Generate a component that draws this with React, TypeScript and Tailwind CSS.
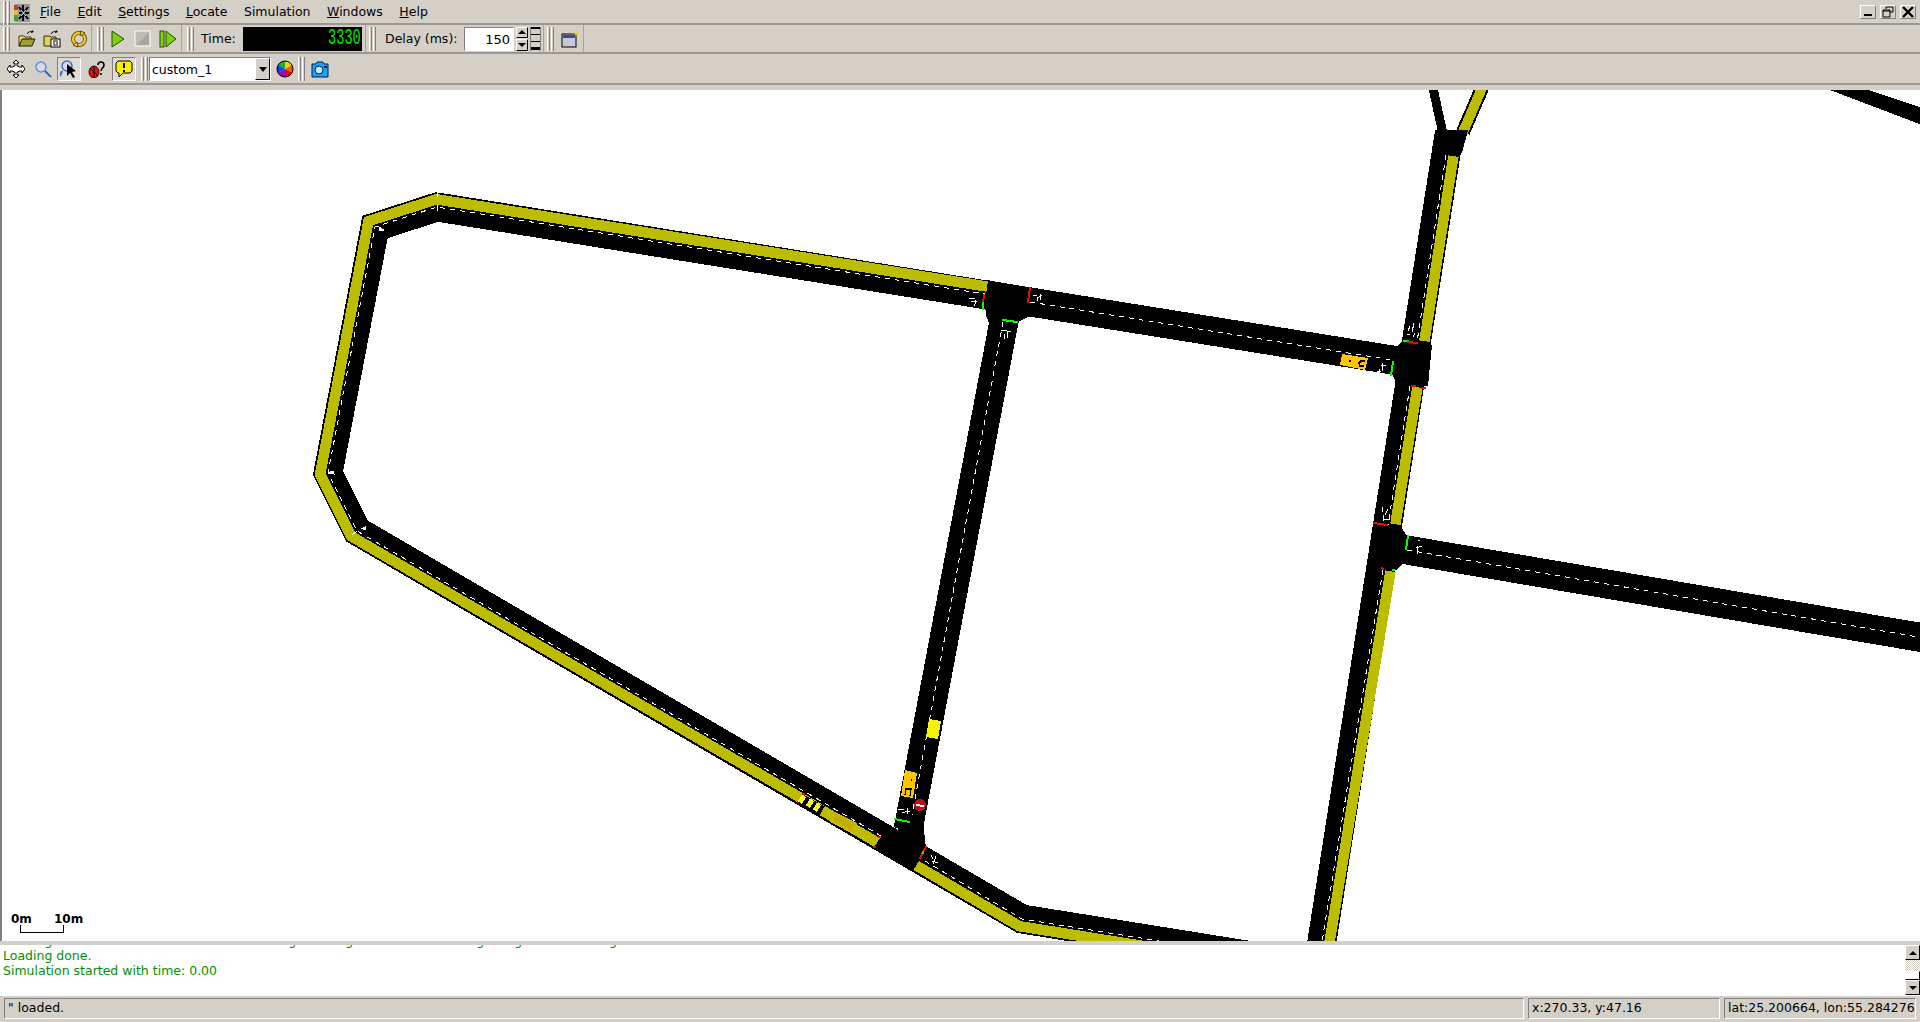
import React from 'react';

type Pt = [number, number];

// shifts a polyline sideways, keeping mitred corners (d > 0 is the driver's left)
function offsetLine(pts: Pt[], d: number): Pt[] {
  const normal = (a: Pt, b: Pt): Pt => {
    const dx = b[0] - a[0];
    const dy = b[1] - a[1];
    const len = Math.hypot(dx, dy);
    return [dy / len, -dx / len];
  };
  return pts.map((p, i) => {
    const n1 = normal(pts[Math.max(i - 1, 0)], pts[Math.max(i, 1)]);
    const n2 = normal(pts[Math.min(i, pts.length - 2)], pts[Math.min(i + 1, pts.length - 1)]);
    const mx = n1[0] + n2[0];
    const my = n1[1] + n2[1];
    const k = (2 * d) / (mx * mx + my * my);
    return [p[0] + mx * k, p[1] + my * k] as Pt;
  });
}

const str = (pts: Pt[]) => pts.map((p) => p.join(',')).join(' ');

const loop: Pt[] = [[1340, 970], [1022, 919], [357, 531], [328, 473], [375, 227], [437, 207], [1405, 362]];
const blackRoads: Pt[][] = [
  loop,
  [[1008, 300], [908, 830]],
  [[1449, 135], [1319, 960]],
  [[1395, 548], [1930, 639]],
];
const laneStrips: Pt[][] = [
  offsetLine([[1340, 970], [1022, 919], [920, 859]], 7.5),
  offsetLine([[881, 836], [357, 531], [328, 473], [375, 227], [437, 207], [986, 294]], 7.5),
  offsetLine([[1446, 155], [1417, 340]], 7.5),
  offsetLine([[1410, 386], [1388, 523]], 7.5),
  offsetLine([[1383, 570], [1319, 960]], 7.5),
];
const centreLines: Pt[][] = [
  [[1340, 970], [1022, 919], [925, 861]],
  [[881, 836], [357, 531], [328, 473], [375, 227], [437, 207], [985, 294]],
  [[1030, 302], [1392, 360]],
  [[1003, 322], [912, 815]],
  [[1446, 155], [1417, 342]],
  [[1410, 386], [1388, 525]],
  [[1383, 570], [1319, 960]],
  [[1407, 550], [1930, 639]],
];
const junctions: string[] = [
  '987,280 1032,288 1030,316 1018,322 990,325 986,316',
  '1398,345 1403,340 1432,345 1428,386 1397,385 1392,373',
  '1402,528 1406,535 1403,563 1397,570 1378,570 1385,522',
  '895,819 923,822 926,848 905,852',
  '1435,130 1468,130 1462,153 1433,153',
];
const RED = '#ff0000';
const GREEN = '#00ff00';
const signals: [number, number, number, number, string][] = [
  [984, 295, 983, 303, RED], [983, 303, 983, 309, GREEN], [1030, 288, 1028, 302, RED], [1003, 320, 1017, 322, GREEN],
  [1393, 362, 1391, 375, GREEN], [1404, 341, 1408, 341, GREEN], [1408, 342, 1417, 343, RED],
  [1412, 386, 1415, 386, RED], [1422, 388, 1425, 388, RED],
  [1374, 523, 1387, 525, RED], [1408, 536, 1406, 549, GREEN], [1382, 568, 1383, 569, RED], [1393, 570, 1394, 570, GREEN],
  [895, 819, 909, 822, GREEN], [926, 847, 923, 852, RED], [923, 852, 922, 855, GREEN], [922, 855, 920, 858, RED],
  [879, 837, 880, 837, RED], [874, 847, 875, 847, RED], [803, 794, 804, 794, RED], [798, 802, 799, 802, RED],
];
const laneArrows = [
  'M969 298h6M971 301l6 1M976 300l-1 4M974 304v2',
  'M1033 295h4M1037 298l5-3M1040 294v6M1037 301v-3',
  'M1001 330h4l2 1v7M1007 331h4M1004 334v5',
  'M898 810l6-1M905 812l5-1M907 808v6M902 812h3',
  'M1379 373l1-4M1381 366l5-1M1382 363v8M1377 371h4',
  'M1408 331l2-5M1412 332l2-9M1410 334l-3 1M1413 337l2-4',
  'M1382 512l1-5M1384 519l6 1M1385 515l3-6M1383 521v-6',
  'M1418 541l2-1M1416 548l6-2M1417 554l1-8',
  'M931 855l2 4M932 861l6 2M936 856l-3 8',
];

function Roads() {
  return (
    <svg className="block" width="1918" height="851" viewBox="2 90 1918 851" shapeRendering="crispEdges" fill="none">
      {blackRoads.map((r, i) => (
        <polyline key={i} points={str(r)} stroke="#000" strokeWidth="29" strokeLinejoin="miter" strokeMiterlimit="8" />
      ))}
      <polygon points="1830,90 1868,90 1922,108 1922,125" fill="#000" />
      <line x1="1433" y1="88" x2="1443" y2="134" stroke="#000" strokeWidth="9" />
      <line x1="1482" y1="88" x2="1463" y2="132" stroke="#000" strokeWidth="14" />
      <line x1="1482" y1="88" x2="1463" y2="132" stroke="#bcbc00" strokeWidth="10" />
      {junctions.map((p) => (
        <polygon key={p} points={p} fill="#000" />
      ))}
      {laneStrips.map((r, i) => (
        <polyline key={i} points={str(r)} stroke="#bcbc00" strokeWidth="10.5" strokeMiterlimit="8" />
      ))}
      {centreLines.map((r, i) => (
        <polyline key={i} points={str(r)} stroke="#fff" strokeWidth="1" strokeDasharray="5 5" />
      ))}
      {signals.map(([x1, y1, x2, y2, c], i) => (
        <line key={i} x1={x1} y1={y1} x2={x2} y2={y2} stroke={c} strokeWidth="2" strokeLinecap="square" />
      ))}
      {laneArrows.map((d) => (
        <path key={d} d={d} stroke="#fff" strokeWidth="1" />
      ))}
      <path d="M379 227l5 3l-4 1zM437 192v5M437 205v6M328 473l5-2l1 3zM357 531l-5 4M361 529l4-2l0 3" stroke="#fff" strokeWidth="1" fill="#fff" />

      {/* vehicles */}
      <line x1="801" y1="799" x2="822" y2="811" stroke="#000" strokeWidth="10.5" />
      {[[800, 798], [808, 802], [815, 806]].map(([x, y]) => (
        <line key={x} x1={x} y1={y} x2={x + 4} y2={y + 2.4} stroke="#f8f820" strokeWidth="8" />
      ))}
      <polygon points="835,812 857,823 853,833 830,822" fill="#e0b000" />
      <polygon points="835,814 855,824 852,831 832,821" fill="#bcb000" />
      <polygon points="929,719 941,721 938,739 926,737" fill="#f4f400" />
      <polygon points="905,770 917,773 913,798 901,796" fill="#ffc400" />
      <path d="M905 795l1-6h5l-1 7M911 780h1" stroke="#000" strokeWidth="1.2" />
      <polygon points="1342,354 1368,358 1365,370 1340,365" fill="#ffc400" />
      <path d="M1365 361h-4l-2 2l1 3h4M1350 360v2" stroke="#000" strokeWidth="1.5" />
      <circle cx="920" cy="805" r="6" fill="#b80f20" />
      <line x1="916" y1="805" x2="924" y2="806" stroke="#fff" strokeWidth="2" />

      {/* scale */}
      <path d="M20 925v7h43v-7" stroke="#000" strokeWidth="1" />
      <text x="11" y="923" fontFamily="DejaVu Sans" fontWeight="700" fontSize="12" fill="#000" stroke="none">0m</text>
      <text x="54" y="923" fontFamily="DejaVu Sans" fontWeight="700" fontSize="12" fill="#000" stroke="none">10m</text>
    </svg>
  );
}

function Grip({ className = '' }: { className?: string }) {
  return (
    <div className={`flex h-[24px] gap-[1px] ${className}`}>
      <div className="w-[3px] border-l border-r border-l-white border-r-[#808080]" />
      <div className="w-[3px] border-l border-r border-l-white border-r-[#808080]" />
    </div>
  );
}

const Ico = ({ children, size = 18, className = '' }: { children: React.ReactNode; size?: number; className?: string }) => (
  <svg width={size} height={size} viewBox="0 0 18 18" className={`shrink-0 ${className}`}>
    {children}
  </svg>
);

const AppIcon = () => (
  <Ico className="ml-[3px]">
    <rect x="2" y="0" width="15" height="18" fill="#9a9a9a" />
    <rect x="1" y="1" width="4" height="5" fill="#c04040" />
    <rect x="1" y="6" width="4" height="5" fill="#d8c040" />
    <rect x="1" y="11" width="4" height="6" fill="#40a040" />
    <path d="M6 3l9 12M15 3l-9 12M10 1v16M6 9h10" stroke="#000" strokeWidth="2" />
    <path d="M8 6l5 6M13 6l-5 6" stroke="#fff" strokeWidth="1" />
  </Ico>
);
const OpenIcon = ({ className }: { className?: string }) => (
  <Ico className={className}>
    <path d="M1 6h5l1 1h6v2H5l-3 7H1z" fill="#f0e080" stroke="#404000" />
    <path d="M4 9h13l-3 7H1z" fill="#a0a030" stroke="#202000" />
    <path d="M9 4c1-2 3-3 5-2" stroke="#000" fill="none" />
    <path d="M14 0l2 2l-3 1z" fill="#000" />
  </Ico>
);
const OpenNetIcon = ({ className }: { className?: string }) => (
  <Ico className={className}>
    <path d="M1 6h6l1 1h5v9H1z" fill="#e0d060" stroke="#303000" />
    <rect x="8" y="9" width="9" height="8" fill="#fff" stroke="#000" />
    <path d="M10 11h5M10 13h2M13 13h2M10 15h5" stroke="#000" />
    <path d="M8 4c1-2 3-3 5-2" stroke="#000" fill="none" />
    <path d="M13 0l2 2l-3 1z" fill="#000" />
  </Ico>
);
const ReloadIcon = ({ className }: { className?: string }) => (
  <Ico className={className}>
    <circle cx="9" cy="9" r="6" fill="none" stroke="#604800" strokeWidth="4" />
    <circle cx="9" cy="9" r="6" fill="none" stroke="#f0c830" strokeWidth="2.4" />
    <path d="M10 1l5 2l-4 3zM8 17l-5-2l4-3z" fill="#f0d840" stroke="#604800" />
  </Ico>
);
const PlayIcon = ({ className }: { className?: string }) => (
  <Ico className={className}>
    <path d="M3 1l12 8l-12 8z" fill="#80d010" stroke="#205000" />
  </Ico>
);
const StopIcon = ({ className }: { className?: string }) => (
  <Ico className={className}>
    <rect x="1" y="1" width="15" height="15" fill="#c0bcb4" stroke="#fff" />
    <path d="M15 2v13H3z" fill="#aaa69e" />
  </Ico>
);
const StepIcon = ({ className }: { className?: string }) => (
  <Ico className={className}>
    <rect x="1" y="1" width="4" height="16" fill="#80d010" stroke="#205000" />
    <path d="M7 1l10 8l-10 8z" fill="#80d010" stroke="#205000" />
  </Ico>
);
const WindowIcon = ({ className }: { className?: string }) => (
  <Ico className={className}>
    <rect x="1" y="4" width="14" height="13" fill="#c8c8d8" stroke="#000" />
    <rect x="2" y="5" width="12" height="3" fill="#404890" />
    <path d="M15 0l1 2l2 1l-2 1l-1 2l-1-2l-2-1l2-1z" fill="#f0d020" />
  </Ico>
);
const MoveIcon = () => (
  <Ico>
    <path d="M9 0l3 3h-2v3h1l1 1h3V5l3 4l-3 4v-2h-3l-1 1h-1v3h2l-3 3l-3-3h2v-3H7l-1-1H3v2L0 9l3-4v2h3l1-1h1V3H6z" fill="#fff" stroke="#000" />
  </Ico>
);
const LensIcon = () => (
  <Ico>
    <circle cx="7" cy="7" r="5" fill="#d8d8e8" stroke="#6090e0" strokeWidth="1.5" />
    <path d="M11 11l6 6" stroke="#3060d0" strokeWidth="2" />
  </Ico>
);
const LensCursorIcon = () => (
  <Ico>
    <circle cx="7" cy="6" r="5" fill="#d8d8e8" stroke="#4070d0" strokeWidth="1.5" />
    <path d="M2 11l-2 5" stroke="#3060d0" strokeWidth="2" />
    <path d="M7 4l9 7l-4 1l3 5l-2 1l-3-5l-3 3z" fill="#000" />
  </Ico>
);
const LadybugIcon = () => (
  <Ico>
    <ellipse cx="6" cy="12" rx="5" ry="6" fill="#e01010" stroke="#500000" />
    <path d="M2 8l8 8M6 6v12" stroke="#000" />
    <path d="M10 5c0-4 6-4 6 0c0 3-3 3-3 6M13 13v2" stroke="#000" strokeWidth="1.6" fill="none" />
  </Ico>
);
const BubbleIcon = () => (
  <Ico>
    <path d="M3 1h12l2 2v8l-2 2H8l-4 4v-4H3l-2-2V3z" fill="#f8f000" stroke="#000" />
    <path d="M9 3v5M9 10v2" stroke="#000" strokeWidth="2" />
  </Ico>
);
const WheelIcon = () => (
  <Ico>
    <path d="M9 9L9 1A8 8 0 0 1 16 5z" fill="#f0d000" />
    <path d="M9 9L16 5A8 8 0 0 1 16 13z" fill="#f06000" />
    <path d="M9 9L16 13A8 8 0 0 1 9 17z" fill="#e00020" />
    <path d="M9 9L9 17A8 8 0 0 1 2 13z" fill="#a000c0" />
    <path d="M9 9L2 13A8 8 0 0 1 2 5z" fill="#1040e0" />
    <path d="M9 9L2 5A8 8 0 0 1 9 1z" fill="#10b040" />
    <ellipse cx="9" cy="9" rx="8" ry="8" fill="none" stroke="#000" />
  </Ico>
);
const CameraIcon = () => (
  <Ico>
    <path d="M1 4h4l1-2h6l1 2h4v13H1z" fill="#20a0f0" stroke="#002060" />
    <circle cx="8" cy="10" r="4" fill="#c0e8ff" stroke="#002060" />
    <rect x="13" y="6" width="3" height="2" fill="#002060" />
  </Ico>
);

const Btn = ({ children, pressed, className = '' }: { children: React.ReactNode; pressed?: boolean; className?: string }) => (
  <div
    className={`flex items-center justify-center ${
      pressed ? 'h-[24px] border border-t-[#808080] border-l-[#808080] border-b-white border-r-white bg-[#dedbd5]' : ''
    } ${className}`}
  >
    {children}
  </div>
);

const Arrow = ({ up }: { up?: boolean }) => (
  <div className="flex flex-1 items-center justify-center border border-t-white border-l-white border-b-black border-r-black bg-[#d4d0c8]">
    <div
      className={
        up
          ? 'h-0 w-0 border-x-[4px] border-b-[4px] border-x-transparent border-b-black'
          : 'h-0 w-0 border-x-[4px] border-t-[4px] border-x-transparent border-t-black'
      }
    />
  </div>
);

const WinBtn = ({ children }: { children: React.ReactNode }) => (
  <div className="flex h-[14px] w-[16px] items-center justify-center border border-t-white border-l-white border-b-[#808080] border-r-[#808080]">
    <svg width="12" height="12" viewBox="0 0 12 12">
      {children}
    </svg>
  </div>
);

const Menu = ({ first, rest }: { first: string; rest: string }) => (
  <span>
    <span className="underline">{first}</span>
    {rest}
  </span>
);

const Sunken = ({ children, className = '' }: { children: React.ReactNode; className?: string }) => (
  <div className={`flex h-[21px] items-center border border-t-[#808080] border-l-[#808080] border-b-white border-r-white pl-[3px] ${className}`}>
    {children}
  </div>
);

export default function App() {
  return (
    <div className="flex h-[1022px] w-[1920px] flex-col overflow-hidden bg-[#d4d0c8] text-[12.5px] text-black [font-family:'DejaVu_Sans',sans-serif]">
      {/* menu bar */}
      <div className="flex h-[25px] shrink-0 items-center border-b-2 border-[#9c9890] pt-[2px]">
        <Grip className="ml-[3px] h-[20px]" />
        <AppIcon />
        <div className="ml-[9px] flex gap-[16.5px]">
          <Menu first="F" rest="ile" />
          <Menu first="E" rest="dit" />
          <Menu first="S" rest="ettings" />
          <Menu first="L" rest="ocate" />
          <span>Simulation</span>
          <Menu first="W" rest="indows" />
          <Menu first="H" rest="elp" />
        </div>
        <div className="ml-auto mr-[4px] flex gap-[4px] -mt-[2px]">
          <WinBtn>
            <path d="M2 9h8" stroke="#000" strokeWidth="2" />
          </WinBtn>
          <WinBtn>
            <path d="M4 3V1h7v5H8M1 4h7v7H1zM1 5h7" stroke="#000" fill="none" />
          </WinBtn>
          <WinBtn>
            <path d="M1 1l10 10M11 1L1 11" stroke="#000" strokeWidth="2.4" />
          </WinBtn>
        </div>
      </div>

      {/* first tool bar */}
      <div className="flex h-[29px] shrink-0 items-center border-b-2 border-[#9c9890]">
        <div className="flex h-full w-[92px] items-center border-r border-[#a8a49c]">
          <Grip className="ml-[3px]" />
          <OpenIcon className="ml-[8px]" />
          <OpenNetIcon className="ml-[7px]" />
          <ReloadIcon className="ml-[9px]" />
        </div>
        <div className="flex h-full w-[90px] items-center border-r border-[#a8a49c]">
          <Grip className="ml-[5px]" />
          <PlayIcon className="ml-[5px]" />
          <StopIcon className="ml-[7px]" />
          <StepIcon className="ml-[7px]" />
        </div>
        <div className="flex h-full w-[184px] items-center border-r border-[#a8a49c]">
          <Grip className="ml-[5px]" />
          <span className="ml-[7px] w-[42px] pt-[2px]">Time:</span>
          <div className="flex h-[24px] w-[119px] items-center justify-end overflow-hidden bg-black pr-[1px]">
            <span className="origin-right scale-x-[0.62] text-[22px] leading-none text-[#00e800] [font-family:'Liberation_Mono',monospace]">3330</span>
          </div>
        </div>
        <div className="flex h-full w-[178px] items-center border-r border-[#a8a49c]">
          <Grip className="ml-[3px]" />
          <span className="ml-[9px] w-[79px] pt-[2px]">Delay (ms):</span>
          <div className="flex h-[24px] w-[50px] items-center justify-end border border-t-[#808080] border-l-[#808080] border-b-white border-r-white bg-white pr-[3px] pt-[2px] text-[13px]">150</div>
          <div className="ml-[2px] flex h-[24px] w-[12px] flex-col gap-[1px]">
            <Arrow up />
            <Arrow />
          </div>
          <div className="ml-[2px] flex h-[24px] w-[11px] flex-col justify-between border-x border-[#808080]">
            <div className="h-[2px] bg-black" />
            <div className="h-[1px] bg-black" />
            <div className="h-[1px] bg-black" />
            <div className="h-[3px] bg-black" />
          </div>
        </div>
        <div className="flex h-full w-[40px] items-center border-r border-[#a8a49c]">
          <Grip className="ml-[3px]" />
          <WindowIcon className="ml-[7px]" />
        </div>
      </div>

      {/* second tool bar */}
      <div className="flex h-[31px] shrink-0 items-center border-b-2 border-[#9c9890] pt-[1px]">
        <Btn className="ml-[7px] w-[18px]"><MoveIcon /></Btn>
        <Btn className="ml-[9px] w-[18px]"><LensIcon /></Btn>
        <Btn pressed className="ml-[5px] w-[24px]"><LensCursorIcon /></Btn>
        <Btn className="ml-[7px] w-[18px]"><LadybugIcon /></Btn>
        <Btn pressed className="ml-[6px] w-[24px]"><BubbleIcon /></Btn>
        <Grip className="ml-[5px]" />
        <div className="ml-[1px] flex h-[24px] w-[122px] items-center border border-t-[#808080] border-l-[#808080] border-b-white border-r-white bg-white pl-[2px]">
          <span className="pt-[2px]">custom_1</span>
          <div className="ml-auto flex h-full w-[15px] items-center justify-center border border-t-white border-l-white border-b-black border-r-black bg-[#d4d0c8]">
            <div className="h-0 w-0 border-x-[4px] border-t-[5px] border-x-transparent border-t-black" />
          </div>
        </div>
        <Btn className="ml-[5px] w-[18px]"><WheelIcon /></Btn>
        <Grip className="ml-[4px]" />
        <Btn className="ml-[6px] w-[18px]"><CameraIcon /></Btn>
      </div>

      {/* view */}
      <div className="mt-[5px] h-[851px] shrink-0 overflow-hidden border-l-2 border-[#808080] bg-white">
        <Roads />
      </div>

      {/* message log */}
      <div className="mt-[4px] flex h-[51px] shrink-0 bg-white text-[12.5px] leading-[15px] text-[#009000]">
        <div className="flex-1 overflow-hidden pl-[3px]">
          <div className="h-[3px] overflow-hidden">
            <div className="-mt-[12px] whitespace-pre">
              <span>Loading</span>
              <span className="ml-[236px]">g</span>
              <span className="ml-[49px]">g</span>
              <span className="ml-[123px]">g</span>
              <span className="ml-[30px]">g</span>
              <span className="ml-[87px]">g</span>
            </div>
          </div>
          <div>Loading done.</div>
          <div>Simulation started with time: 0.00</div>
        </div>
        <div className="flex w-[15px] flex-col">
          <div className="flex h-[15px] [&>div]:h-full [&>div]:w-full"><Arrow up /></div>
          <div className="h-[11px] bg-[repeating-conic-gradient(#d4d0c8_0_25%,#fff_0_50%)] bg-[length:2px_2px]" />
          <div className="h-[9px] border border-t-white border-l-white border-b-black border-r-black" />
          <div className="flex h-[15px] [&>div]:h-full [&>div]:w-full"><Arrow /></div>
        </div>
      </div>

      {/* status bar */}
      <div className="mt-[2px] flex gap-[4px] px-[4px]">
        <Sunken className="flex-1">&quot; loaded.</Sunken>
        <Sunken className="w-[192px]">x:270.33, y:47.16</Sunken>
        <Sunken className="w-[192px]">lat:25.200664, lon:55.284276</Sunken>
      </div>
    </div>
  );
}
